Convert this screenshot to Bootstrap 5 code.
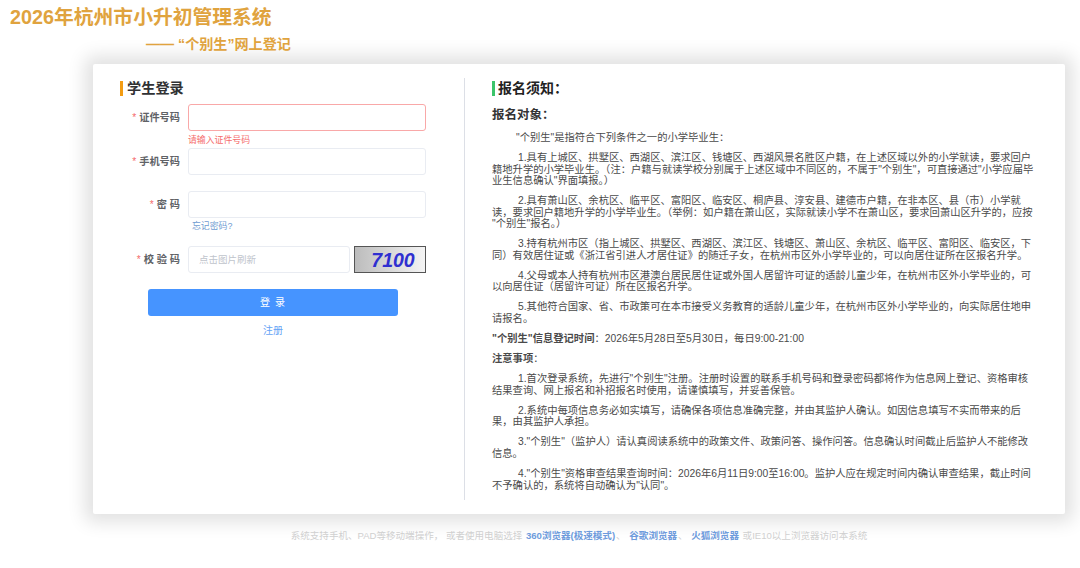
<!DOCTYPE html>
<html lang="zh-CN">
  <head>
    <meta charset="UTF-8" />
    <title>2026年杭州市小升初管理系统</title>
    <link href="https://cdn.jsdelivr.net/npm/bootstrap@5.3.2/dist/css/bootstrap.min.css" rel="stylesheet" />
    <style>
      html, body { height: 568px; overflow: hidden; }
      body { font-family: "Liberation Sans", "Noto Sans CJK SC", sans-serif; background: #fff; color: #333; }
      .page-head { height: 64px; padding: 6px 0 0 10px; color: #e0a33e; font-weight: 700; }
      .main-title { font-size: 19.8px; line-height: 22px; }
      .sub-title { font-size: 14.1px; line-height: 18px; margin: 7px 0 0 136px; }
      .login-box { width: 972px; height: 450px; margin-left: 93px; background: #fff; border-radius: 2px; box-shadow: 0 0 18px 8px rgba(0, 0, 0, .12); padding-top: 14px; }
      .left-pane { width: 372px; height: 422px; border-right: 1px solid #dcdfe6; padding: 3px 0 0 27px; }
      .right-pane { width: 545px; margin-left: 27px; font-size: 10.3px; line-height: 11.5px; color: #4a4a4a; }
      .pane-title { border-left: 3px solid #f39c12; padding-left: 4px; font-size: 14.2px; line-height: 15px; font-weight: 700; color: #303133; margin-bottom: 8px; }
      .green-bar { border-left-color: #3cc46a; margin: 3px 0 0; padding-left: 3px; font-size: 14px; color: #222; }
      .field-row { display: flex; align-items: center; height: 27px; }
      .field-gap { height: 16px; }
      .field-label { width: 60px; margin: 1px 8px 0 0; text-align: right; font-size: 10.2px; font-weight: 700; color: #606266; white-space: nowrap; }
      .field-label i { color: #f56c6c; font-style: normal; font-weight: 400; margin-right: 3px; }
      .field-input { height: 27px; width: 238px; margin-top: 0; padding: 0 10px; border: 1px solid #e9ecf2; border-radius: 3px; font-size: 9.5px; }
      .field-input::placeholder { color: #c0c4cc; }
      .field-error { border-color: #f9a8a8; }
      .short-input { width: 162px; }
      .hint-text { height: 17px; margin-left: 68px; font-size: 8.9px; line-height: 18px; color: #f56c6c; }
      .forgot-text { height: 28px; margin-left: 72px; font-size: 8.9px; line-height: 16px; color: #6f9bd1; }
      .captcha-box { width: 72px; height: 27px; margin-left: 4px; border: 1px solid #555; background: linear-gradient(90deg, #bcbcbc, #f4f4f4); color: #2f2fd0; font: italic 700 19.5px/26px "Liberation Sans", sans-serif; text-align: center; padding-left: 6px; }
      .login-btn { display: block; width: 250px; height: 27px; margin: 16px 0 0 28px; padding: 0; border: 0; border-radius: 3px; background: #4694ff; color: #fff; font-size: 10px; letter-spacing: 1px; }
      .register-link { display: block; width: 250px; margin: 8px 0 0 28px; text-align: center; font-size: 10px; line-height: 14px; color: #66a3f5; text-decoration: none; }
      .notice-sub { font-size: 12.5px; line-height: 16px; font-weight: 700; color: #333; margin: 11px 0 9px; }
      .right-pane p { margin: 0 0 8.6px; }
      .indent-one { text-indent: 24px; }
      .indent-two { text-indent: 26px; }
      .foot-note { margin-top: 15px; padding-left: 78px; text-align: center; font-size: 9.55px; line-height: 14px; color: #d0d0d0; }
      .foot-note b { color: #6e9bdc; margin: 0 1px; }
    </style>
  </head>
  <body>
    <div class="page-head">
      <div class="main-title">2026年杭州市小升初管理系统</div>
      <div class="sub-title">—— “个别生”网上登记</div>
    </div>

    <div class="login-box d-flex">
      <!-- login form -->
      <div class="left-pane flex-shrink-0">
        <div class="pane-title">学生登录</div>
        <div class="field-row">
          <label class="field-label"><i>*</i>证件号码</label>
          <input class="field-input field-error" type="text" />
        </div>
        <div class="hint-text">请输入证件号码</div>
        <div class="field-row">
          <label class="field-label"><i>*</i>手机号码</label>
          <input class="field-input" type="text" />
        </div>
        <div class="field-gap"></div>
        <div class="field-row">
          <label class="field-label"><i>*</i>密 码</label>
          <input class="field-input" type="password" />
        </div>
        <div class="forgot-text">忘记密码?</div>
        <div class="field-row">
          <label class="field-label"><i>*</i>校 验 码</label>
          <input class="field-input short-input" type="text" placeholder="点击图片刷新" />
          <div class="captcha-box">7100</div>
        </div>
        <button class="login-btn" type="button">登 录</button>
        <a class="register-link" href="#">注册</a>
      </div>

      <!-- notice -->
      <div class="right-pane">
        <div class="pane-title green-bar">报名须知：</div>
        <div class="notice-sub">报名对象：</div>
        <p class="indent-one">"个别生"是指符合下列条件之一的小学毕业生：</p>
        <p class="indent-two">1.具有上城区、拱墅区、西湖区、滨江区、钱塘区、西湖风景名胜区户籍，在上述区域以外的小学就读，要求回户籍地升学的小学毕业生。（注：户籍与就读学校分别属于上述区域中不同区的，不属于"个别生"，可直接通过"小学应届毕业生信息确认"界面填报。）</p>
        <p class="indent-two">2.具有萧山区、余杭区、临平区、富阳区、临安区、桐庐县、淳安县、建德市户籍，在非本区、县（市）小学就读，要求回户籍地升学的小学毕业生。（举例：如户籍在萧山区，实际就读小学不在萧山区，要求回萧山区升学的，应按<wbr />"个别生"报名。）</p>
        <p class="indent-two">3.持有杭州市区（指上城区、拱墅区、西湖区、滨江区、钱塘区、萧山区、余杭区、临平区、富阳区、临安区，下同）有效居住证或《浙江省引进人才居住证》的随迁子女，在杭州市区外小学毕业的，可以向居住证所在区报名升学。</p>
        <p class="indent-two">4.父母或本人持有杭州市区港澳台居民居住证或外国人居留许可证的适龄儿童少年，在杭州市区外小学毕业的，可以向居住证（居留许可证）所在区报名升学。</p>
        <p class="indent-two">5.其他符合国家、省、市政策可在本市接受义务教育的适龄儿童少年，在杭州市区外小学毕业的，向实际居住地申请报名。</p>
        <p><b>"个别生"信息登记时间</b>：2026年5月28日至5月30日，每日9:00-21:00</p>
        <p><b>注意事项</b>：</p>
        <p class="indent-two">1.首次登录系统，先进行"个别生"注册。注册时设置的联系手机号码和登录密码都将作为信息网上登记、资格审核结果查询、网上报名和补招报名时使用，请谨慎填写，并妥善保管。</p>
        <p class="indent-two">2.系统中每项信息务必如实填写，请确保各项信息准确完整，并由其监护人确认。如因信息填写不实而带来的后果，由其监护人承担。</p>
        <p class="indent-two">3."个别生"（监护人）请认真阅读系统中的政策文件、政策问答、操作问答。信息确认时间截止后监护人不能修改信息。</p>
        <p class="indent-two">4."个别生"资格审查结果查询时间：2026年6月11日9:00至16:00。监护人应在规定时间内确认审查结果，截止时间不予确认的，系统将自动确认为"认同"。</p>
      </div>
    </div>

    <div class="foot-note">系统支持手机、PAD等移动端操作， 或者使用电脑选择 <b>360浏览器(极速模式)</b>、 <b>谷歌浏览器</b>、 <b>火狐浏览器</b> 或IE10以上浏览器访问本系统</div>

    <script src="https://cdn.jsdelivr.net/npm/bootstrap@5.3.2/dist/js/bootstrap.bundle.min.js"></script>
  </body>
</html>
